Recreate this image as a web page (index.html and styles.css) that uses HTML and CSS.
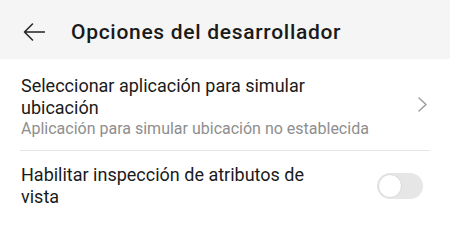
FILE: index.html
```html
<!DOCTYPE html>
<html lang="es">
<head>
<meta charset="utf-8">
<link rel="stylesheet" href="styles.css">
</head>
<body>
<header class="appbar">
  <svg class="back" width="22" height="18" viewBox="0 0 22 18"><path d="M21.5 9H1.5M9.5 1L1.5 9l8 8" fill="none" stroke="#222" stroke-width="1.5" stroke-linecap="round" stroke-linejoin="round"/></svg>
  <h1 class="title">Opciones del desarrollador</h1>
</header>
<main class="list">
  <div class="row">
    <div class="text">
      <div class="label">Seleccionar aplicación para simular ubicación</div>
      <div class="sub">Aplicación para simular ubicación no establecida</div>
    </div>
    <svg class="chev" width="9" height="15" viewBox="0 0 9 15"><path d="M1 1l7 6.5L1 14" fill="none" stroke="#9a9a9a" stroke-width="1.4" stroke-linecap="round" stroke-linejoin="round"/></svg>
  </div>
  <div class="row second">
    <div class="text">
      <div class="label">Habilitar inspección de atributos de vista</div>
    </div>
    <div class="toggle"><div class="knob"></div></div>
  </div>
</main>
</body>
</html>
```
FILE: styles.css
```css
html, body {
  margin: 0;
  padding: 0;
  background: #ffffff;
  font-family: Roboto, "Noto Sans", sans-serif;
}
.appbar {
  height: 59px;
  background: #f5f5f5;
  display: flex;
  align-items: flex-start;
  padding-left: 23px;
  box-sizing: border-box;
}
.back {
  flex: none;
  margin-top: 23px;
}
.title {
  margin: 20px 0 0 26px;
  font-size: 21px;
  font-weight: 500;
  letter-spacing: 0.7px;
  color: #1a1a1a;
  line-height: 24px;
}
.list {
  margin: 0 20px;
}
.row {
  display: flex;
  align-items: center;
  padding: 16px 0 12px 1px;
  border-bottom: 1px solid #e6e6e6;
}
.row.second {
  border-bottom: none;
  padding-top: 13px;
}
.text {
  flex: 1;
}
.label {
  font-size: 18px;
  line-height: 22px;
  color: #1a1a1a;
  max-width: 312px;
}
.sub {
  font-size: 16px;
  line-height: 19px;
  color: #8e8e8e;
  white-space: nowrap;
}
.chev {
  margin-left: auto;
  margin-right: 3px;
  margin-bottom: 4px;
}
.toggle {
  margin-left: auto;
  margin-right: 7px;
  width: 46px;
  height: 26px;
  border-radius: 13px;
  background: #e6e6e6;
  position: relative;
}
.knob {
  position: absolute;
  left: 1px;
  top: 1px;
  width: 22px;
  height: 22px;
  border-radius: 50%;
  background: #fff;
  border: 1px solid #d9d9d9;
}
```
